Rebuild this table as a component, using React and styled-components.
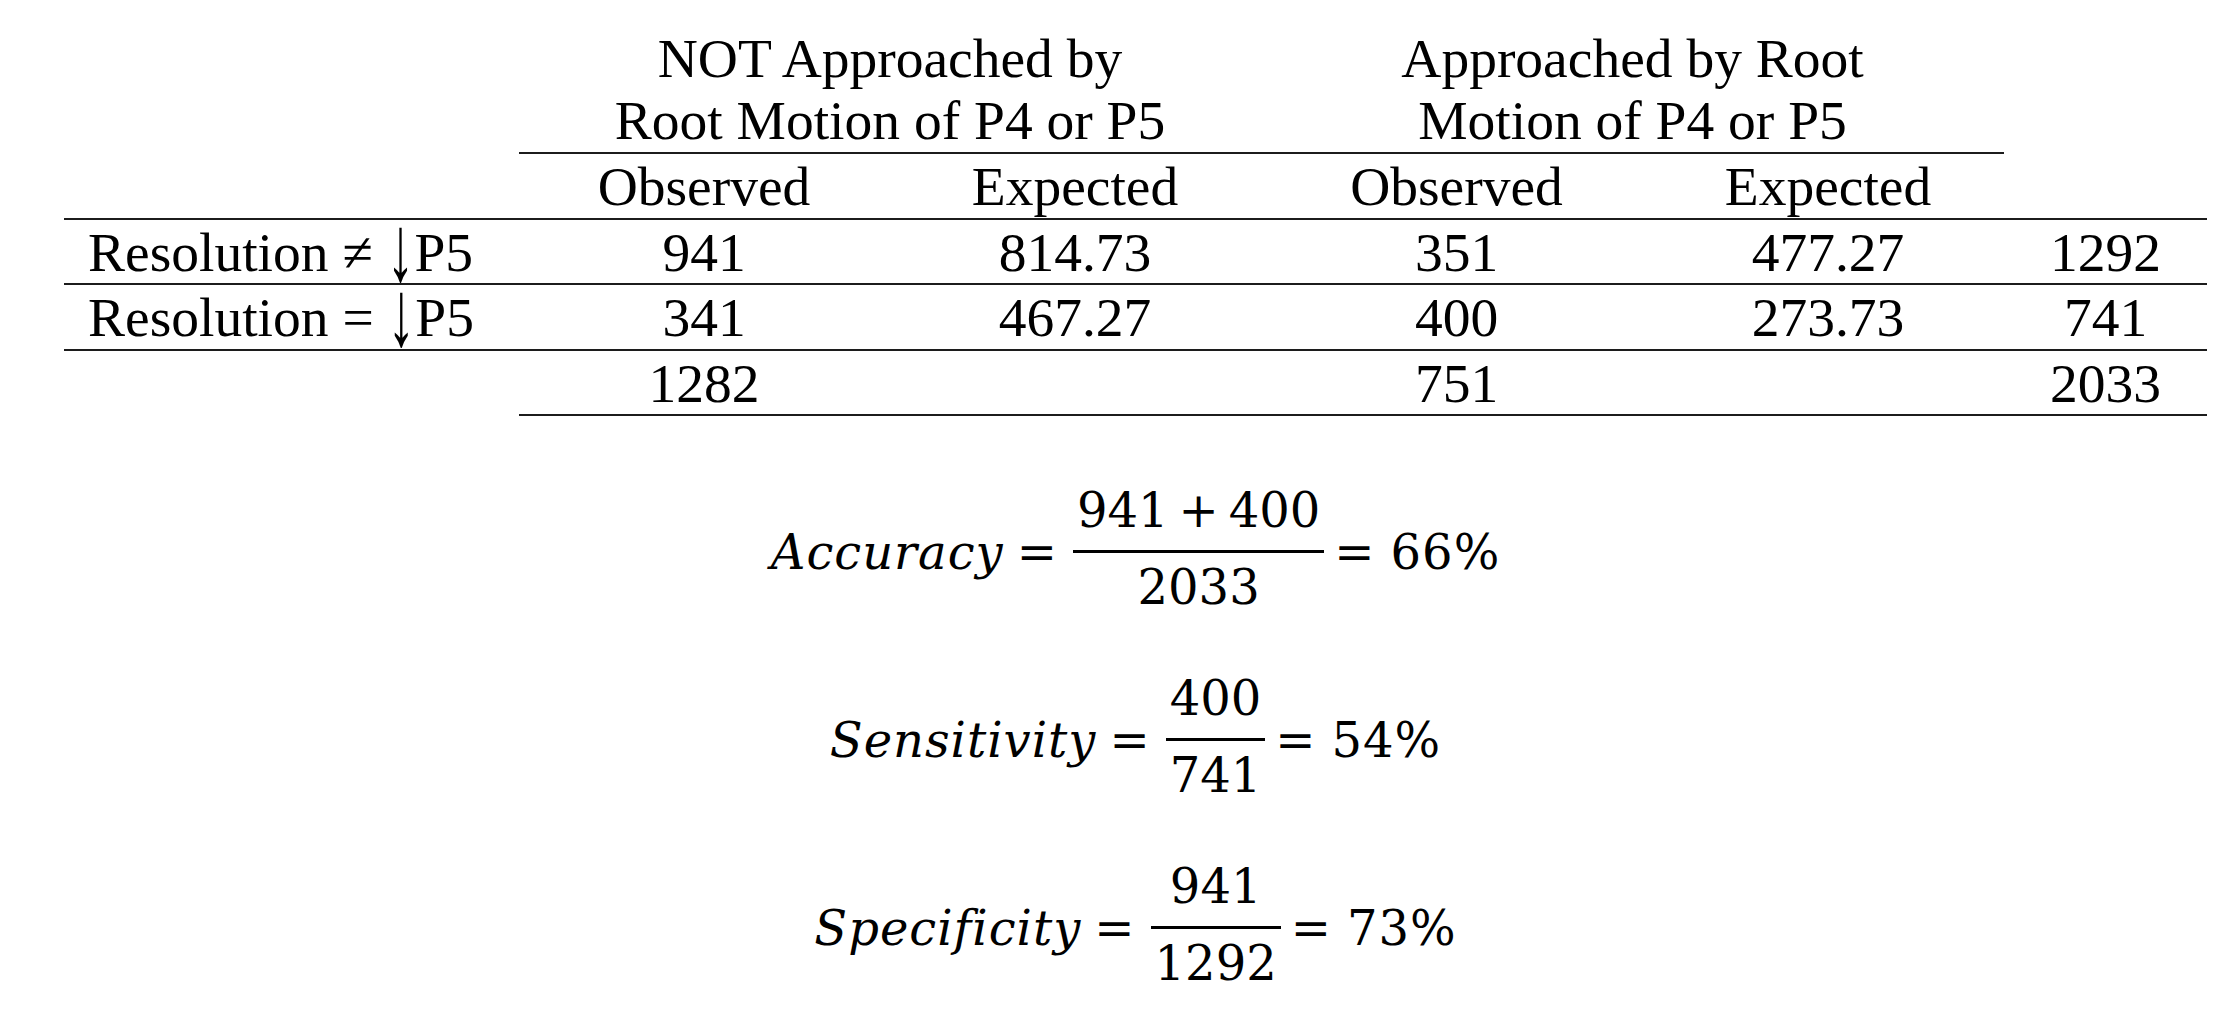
import React from 'react';
import styled, { createGlobalStyle, css } from 'styled-components';

const GlobalStyle = createGlobalStyle`
  html, body {
    margin: 0;
    padding: 0;
    background: #fff;
  }
`;

const rule = '2px solid #1c1c1c';

const Page = styled.div`
  width: 2240px;
  height: 1024px;
  padding-left: 64px;
  box-sizing: border-box;
  overflow: hidden;
  color: #000;
`;

const Table = styled.table`
  border-collapse: collapse;
  table-layout: fixed;
  width: 2143px;
  font-family: "Liberation Serif", "Times New Roman", serif;
  font-size: 55.5px;
`;

const Col = styled.col`
  width: ${({ $w }) => $w}px;
`;

const cellBase = css`
  padding: 2px 0 0;
  line-height: 61.5px;
  font-weight: normal;
  white-space: nowrap;
  text-align: ${({ $left }) => ($left ? 'left' : 'center')};
  padding-left: ${({ $left }) => ($left ? '24px' : '0')};
  border-bottom: ${({ $ruled }) => ($ruled ? rule : 'none')};
`;

const GroupHead = styled.th`
  padding: 28px 0 0;
  line-height: 62px;
  font-weight: normal;
  text-align: center;
  vertical-align: top;
  border-bottom: ${({ $ruled }) => ($ruled ? rule : 'none')};
`;

const ColHead = styled.th`
  ${cellBase}
`;

const Cell = styled.td`
  ${cellBase}
`;

/* the arrow glyph is short in Liberation Serif, so stretch it down past the baseline */
const Arrow = styled.span`
  display: inline-block;
  line-height: 24px;
  transform: translateY(10px) scaleY(1.68);
  transform-origin: 50% 30.8px;
`;

const Equations = styled.div`
  width: 2143px;
  margin-top: 70px;
  display: flex;
  flex-direction: column;
  align-items: center;
  gap: 57px;
  font-family: "DejaVu Serif", serif;
  font-size: 48px;
  line-height: 48px;
`;

const Equation = styled.div`
  display: flex;
  align-items: center;
  white-space: nowrap;
`;

const Name = styled.span`
  font-style: italic;
  letter-spacing: 1px;
`;

const Op = styled.span`
  margin: 0 ${({ $right }) => $right}px 0 ${({ $left }) => $left}px;
`;

const Fraction = styled.span`
  display: flex;
  flex-direction: column;
  align-items: center;
  margin-bottom: 6px;
`;

const Term = styled.span`
  padding: 0 4px;
`;

const Bar = styled.span`
  align-self: stretch;
  height: 3px;
  background: #000;
  margin: 16px 0 10px;
`;

const Plus = styled.span`
  margin: 0 10px;
`;

const Result = styled.span`
  letter-spacing: 1px;
`;

const widths = [455, 370, 372, 391, 352, 203];

const rows = [
  { rel: '≠', values: ['941', '814.73', '351', '477.27', '1292'] },
  { rel: '=', values: ['341', '467.27', '400', '273.73', '741'] },
];

const totals = ['1282', '', '751', '', '2033'];

function Ratio({ name, num, den, result }) {
  return (
    <Equation>
      <Name>{name}</Name>
      <Op $left={13} $right={16}>=</Op>
      <Fraction>
        <Term>{num}</Term>
        <Bar />
        <Term>{den}</Term>
      </Fraction>
      <Op $left={10} $right={16}>=</Op>
      <Result>{result}</Result>
    </Equation>
  );
}

export default function App() {
  return (
    <Page>
      <GlobalStyle />
      <Table>
        <colgroup>
          {widths.map((w, i) => <Col key={i} $w={w} />)}
        </colgroup>
        <thead>
          <tr>
            <GroupHead />
            <GroupHead colSpan={2} $ruled>
              NOT Approached by
              <br />
              Root Motion of P4 or P5
            </GroupHead>
            <GroupHead colSpan={2} $ruled>
              Approached by Root
              <br />
              Motion of P4 or P5
            </GroupHead>
            <GroupHead />
          </tr>
          <tr>
            <ColHead $ruled />
            <ColHead $ruled>Observed</ColHead>
            <ColHead $ruled>Expected</ColHead>
            <ColHead $ruled>Observed</ColHead>
            <ColHead $ruled>Expected</ColHead>
            <ColHead $ruled />
          </tr>
        </thead>
        <tbody>
          {rows.map((row) => (
            <tr key={row.rel}>
              <Cell $left $ruled>
                Resolution {row.rel} <Arrow>↓</Arrow>P5
              </Cell>
              {row.values.map((v, i) => (
                <Cell key={i} $ruled>{v}</Cell>
              ))}
            </tr>
          ))}
          <tr>
            <Cell />
            {totals.map((v, i) => (
              <Cell key={i} $ruled>{v}</Cell>
            ))}
          </tr>
        </tbody>
      </Table>

      <Equations>
        <Ratio
          name="Accuracy"
          num={<>941<Plus>+</Plus>400</>}
          den="2033"
          result="66%"
        />
        <Ratio name="Sensitivity" num="400" den="741" result="54%" />
        <Ratio name="Specificity" num="941" den="1292" result="73%" />
      </Equations>
    </Page>
  );
}
